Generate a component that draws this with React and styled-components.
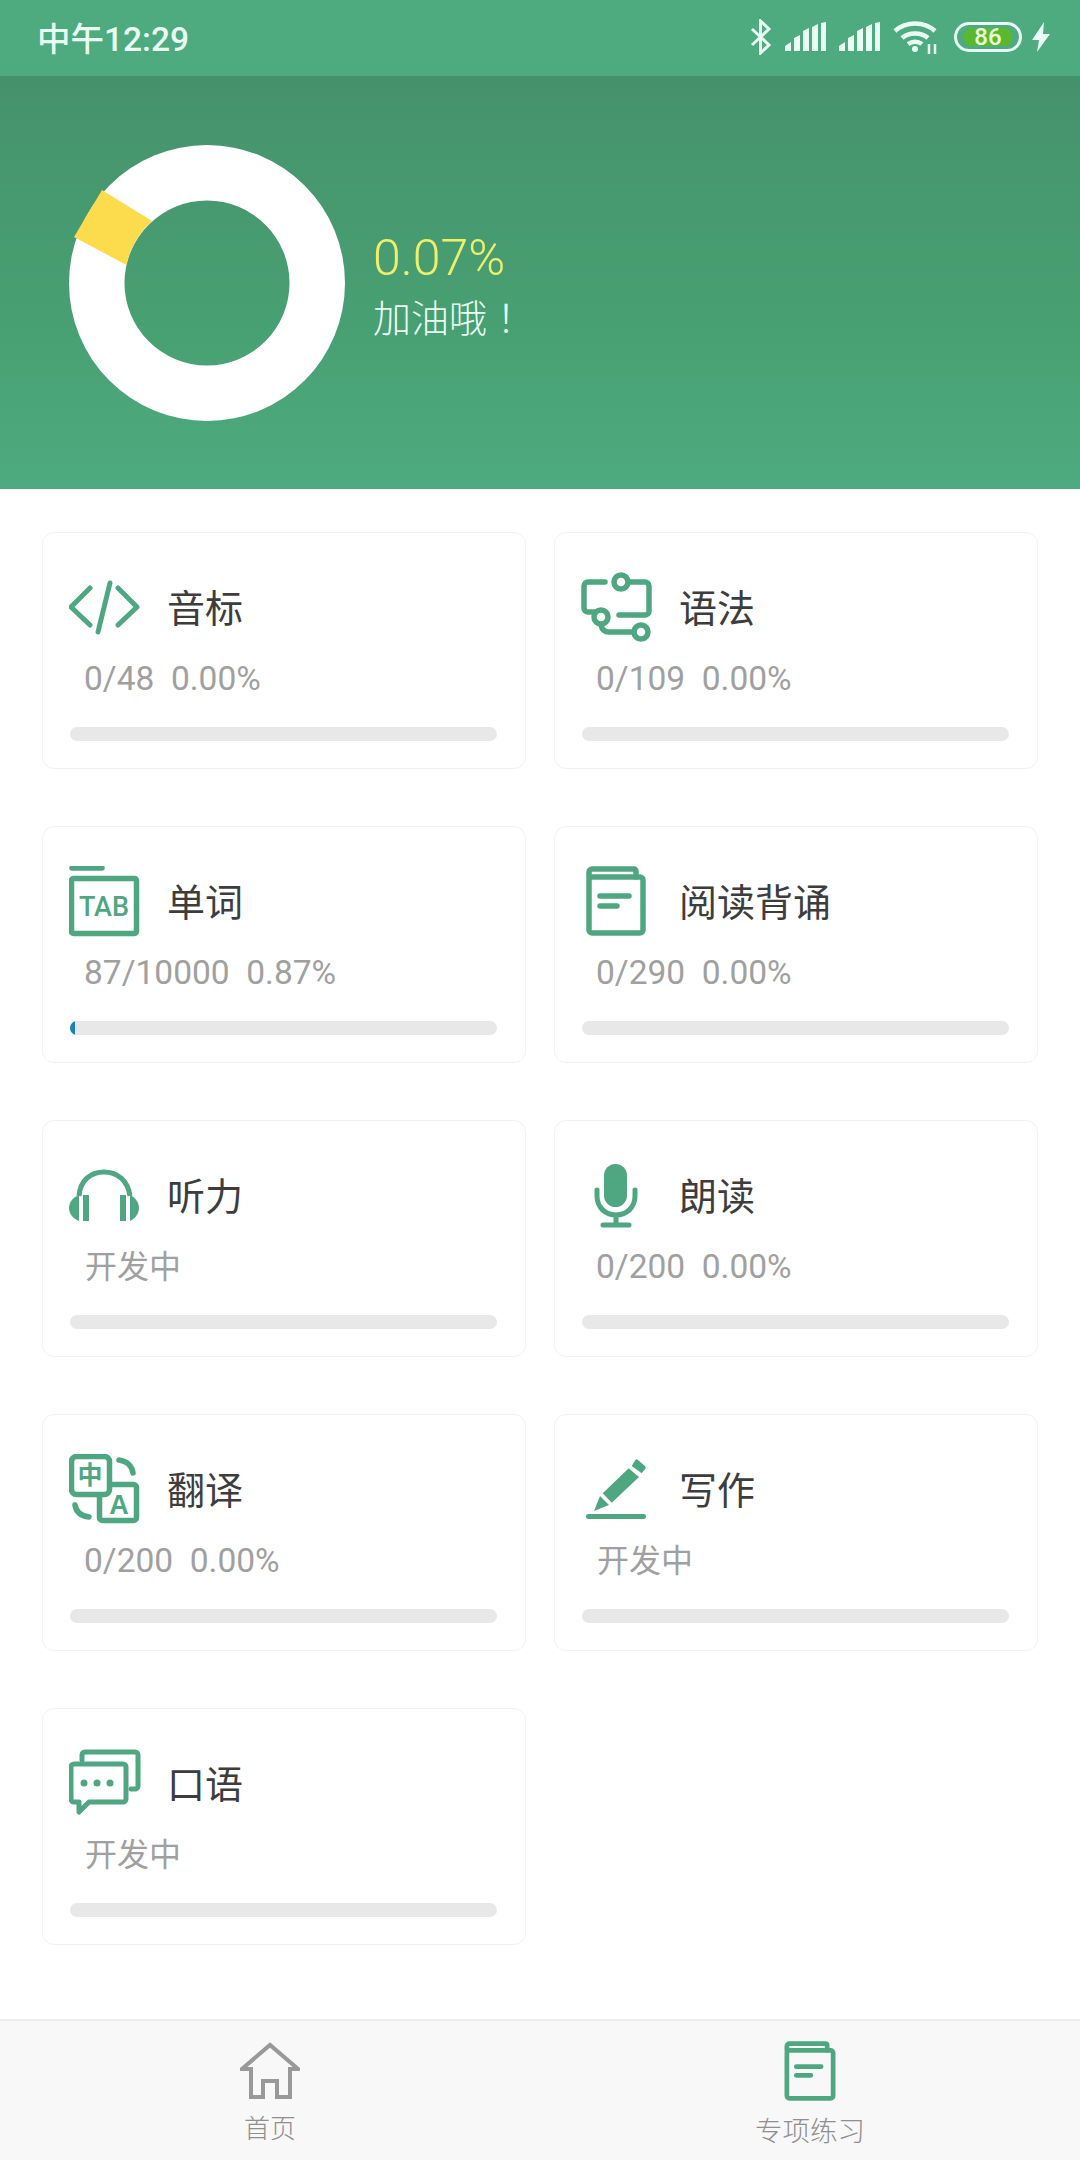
import styled, { createGlobalStyle } from 'styled-components';

const GREEN = '#4fa782';
const WIP = '开发中';

const cards = [
  { title: '音标', meta: '0/48  0.00%', icon: 'code' },
  { title: '语法', meta: '0/109  0.00%', icon: 'grammar' },
  { title: '单词', meta: '87/10000  0.87%', icon: 'tab', done: 1.2 },
  { title: '阅读背诵', meta: '0/290  0.00%', icon: 'book' },
  { title: '听力', meta: WIP, icon: 'headset' },
  { title: '朗读', meta: '0/200  0.00%', icon: 'mic' },
  { title: '翻译', meta: '0/200  0.00%', icon: 'translate' },
  { title: '写作', meta: WIP, icon: 'pencil' },
  { title: '口语', meta: WIP, icon: 'chat' },
];

const BookShape = () => (
  <g fill="none" stroke={GREEN} strokeWidth="5.5" strokeLinecap="round" strokeLinejoin="round">
    <path d="M8 11V6a3 3 0 0 1 3-3h42a2 2 0 0 1 2 2v6" />
    <rect x="8" y="11" width="54" height="56" rx="3" />
    <path d="M19 30h29M19 40h17" />
  </g>
);

const icons = {
  code: (
    <g fill="none" stroke={GREEN} strokeWidth="5" strokeLinecap="round" strokeLinejoin="round">
      <path d="M21 16 2 35l19 18M49 16l19 19-19 18M41 11 29 60" />
    </g>
  ),
  grammar: (
    <g fill="none" stroke={GREEN} strokeWidth="5.5" strokeLinecap="round" strokeLinejoin="round">
      <circle cx="40" cy="10" r="7" />
      <circle cx="20" cy="45" r="7" />
      <circle cx="60" cy="60" r="7" />
      <path d="M24 10H7a4 4 0 0 0-4 4v22a4 4 0 0 0 4 4h6" />
      <path d="M49 10h15a4 4 0 0 1 4 4v25a4 4 0 0 1-4 4H38" />
      <path d="M20 53c1 5 4 7 8 7h24" />
    </g>
  ),
  tab: (
    <>
      <g fill="none" stroke={GREEN} strokeWidth="5.5" strokeLinecap="round" strokeLinejoin="round">
        <path d="M3 2h30" />
        <rect x="2.5" y="12.5" width="65" height="55" rx="2" />
      </g>
      <text x="35" y="50" textAnchor="middle" fill={GREEN} fontSize="27" fontWeight="500" fontFamily="Roboto, sans-serif">TAB</text>
    </>
  ),
  book: <BookShape />,
  headset: (
    <g fill={GREEN}>
      <path d="M10 36C11 21 21 12 35 12s24 9 26 24" fill="none" stroke={GREEN} strokeWidth="5" />
      <path d="M10 35C3 38 0 43 0 48s3 10 10 13z" />
      <path d="M61 35c6 3 9 8 9 13s-3 10-9 13z" />
      <rect x="14" y="35" width="6" height="26" />
      <rect x="51" y="35" width="6" height="26" />
    </g>
  ),
  mic: (
    <g fill="none" stroke={GREEN} strokeWidth="5" strokeLinecap="round">
      <rect x="23" y="4" width="23" height="43" rx="11.5" fill={GREEN} stroke="none" />
      <path d="M16 30v6c0 11 8 19 19 19s19-8 19-19v-6M35 55v9M22 65h26" />
    </g>
  ),
  translate: (
    <>
      <g fill="none" stroke={GREEN} strokeWidth="5.5" strokeLinecap="round">
        <rect x="30.5" y="30.5" width="37" height="36" rx="3" />
        <rect x="2.5" y="2.5" width="38" height="38" rx="5" fill="#fff" />
        <path d="M50 6c8 1 13 6 14 13M6 51c1 7 6 11 14 12" />
      </g>
      <text x="21" y="30" textAnchor="middle" fill={GREEN} fontSize="25" fontWeight="700" fontFamily="'Noto Sans CJK SC', sans-serif">中</text>
      <text x="50" y="60" textAnchor="middle" fill={GREEN} fontSize="27" fontWeight="700" fontFamily="'Liberation Sans', sans-serif">A</text>
    </>
  ),
  pencil: (
    <g fill={GREEN}>
      <path d="M13 57 19 42l9 9z" />
      <path d="M21.7 39.3 47.7 14.3 58 23 30.7 48.7z" />
      <path d="M50.7 12 54 6.5a2 2 0 0 1 3-.5l7 6a2 2 0 0 1 .3 2.7L60.7 19.3z" />
      <rect x="5" y="60" width="60" height="5" rx="2.5" />
    </g>
  ),
  chat: (
    <g fill="none" stroke={GREEN} strokeWidth="5" strokeLinecap="round" strokeLinejoin="round">
      <path d="M13 12V7a3 3 0 0 1 3-3h50a3 3 0 0 1 3 3v31a3 3 0 0 1-3 3h-4" />
      <path d="M5 16h49a3 3 0 0 1 3 3v32a3 3 0 0 1-3 3H20l-10 10v-10H5a3 3 0 0 1-3-3V19a3 3 0 0 1 3-3z" />
      <g fill={GREEN} stroke="none">
        <circle cx="15" cy="35" r="3.5" />
        <circle cx="28" cy="35" r="3.5" />
        <circle cx="41" cy="35" r="3.5" />
      </g>
    </g>
  ),
};

const SignalBars = () => (
  <svg width="41" height="30" viewBox="0 0 41 30" fill="#e9fff3">
    <path d="M0 29v-5l6-4v9zM9 29V16l6-3v16zM18 29V9l6-3v23zM27 29V5l6-3v27zM36 29V1l5-1v29z" />
  </svg>
);

const App = () => (
  <Page>
    <GlobalStyle />
    <StatusBar>
      <Time>中午12:29</Time>
      <StatusIcons>
        <svg width="22" height="36" viewBox="0 0 22 36" fill="none" stroke="#e9fff3" strokeWidth="3">
          <path d="M2 10l17 16-8.5 8V2L19 10 2 26" />
        </svg>
        <SignalBars />
        <SignalBars />
        <svg width="46" height="34" viewBox="0 0 46 34" fill="none" stroke="#e9fff3" strokeWidth="4.5">
          <path d="M2 11c11-10 29-10 40 0M9 18c7-6 19-6 26 0M15 24c4-3 10-3 14 0" />
          <circle cx="22" cy="29" r="3" fill="#e9fff3" stroke="none" />
          <path d="M36 24v10M42 24v10" strokeWidth="2.5" />
        </svg>
        <Battery>
          <BatteryFill>86</BatteryFill>
        </Battery>
        <Bolt>
          <svg width="18" height="30" viewBox="0 0 18 30" fill="#e9fff3">
            <path d="M12 0 0 18h7L5 30l13-18h-7z" />
          </svg>
        </Bolt>
      </StatusIcons>
    </StatusBar>

    <Header>
      <svg width="276" height="276" viewBox="0 0 276 276">
        <path
          fillRule="evenodd"
          fill="#fff"
          d="M138 0a138 138 0 1 0 0 276a138 138 0 1 0 0-276zM138 55.5a82.5 82.5 0 1 1 0 165a82.5 82.5 0 1 1 0-165z"
        />
        <path fill="#fcdc4c" d="M33 45 83 76A82.5 82.5 0 0 0 57.4 120L5 92z" />
      </svg>
      <Progress>
        <Percent>0.07%</Percent>
        <Cheer>加油哦！</Cheer>
      </Progress>
    </Header>

    <CardGrid>
      {cards.map((card) => (
        <Card key={card.title}>
          <CardHead>
            <svg width="72" height="72" viewBox="0 0 72 72">{icons[card.icon]}</svg>
            <CardTitle>{card.title}</CardTitle>
          </CardHead>
          <CardMeta $wip={card.meta === WIP}>{card.meta}</CardMeta>
          <Bar>{card.done > 0 && <BarFill style={{ width: `${card.done}%` }} />}</Bar>
        </Card>
      ))}
    </CardGrid>

    <TabBar>
      <Tab>
        <svg width="60" height="60" viewBox="0 0 60 60" fill="none" stroke="#999" strokeWidth="4" strokeLinejoin="miter">
          <path d="M11 56V28H2L30 4l28 24h-8v28H37V40H23v16z" />
        </svg>
        <TabLabel>首页</TabLabel>
      </Tab>
      <Tab>
        <svg width="54" height="60" viewBox="5 0 60 70">
          <BookShape />
        </svg>
        <TabLabel $active>专项练习</TabLabel>
      </Tab>
    </TabBar>
  </Page>
);

const GlobalStyle = createGlobalStyle`
  html, body {
    margin: 0;
    padding: 0;
    background: #fff;
  }
  body {
    font-family: Roboto, "Noto Sans CJK SC", sans-serif;
  }
  svg {
    display: block;
    flex-shrink: 0;
  }
`;

const Page = styled.div`
  width: 1080px;
  height: 2160px;
  display: flex;
  flex-direction: column;
  background: #fff;
  overflow: hidden;
`;

const StatusBar = styled.div`
  height: 76px;
  flex-shrink: 0;
  box-sizing: border-box;
  padding: 0 30px 3px 37px;
  display: flex;
  align-items: center;
  justify-content: space-between;
  background: #4dab7f;
`;

const Time = styled.span`
  font-size: 33.5px;
  font-weight: 500;
  color: #eafff3;
`;

const StatusIcons = styled.div`
  display: flex;
  align-items: center;
  gap: 13px;
`;

const Battery = styled.div`
  width: 68px;
  height: 30px;
  box-sizing: border-box;
  padding: 3px;
  border: 3px solid #e9fff3;
  border-radius: 15px;
  margin-left: 2px;
`;

const BatteryFill = styled.div`
  height: 100%;
  margin: 0 4px;
  border-radius: 8px;
  background: #5ab82f;
  display: flex;
  align-items: center;
  justify-content: center;
  font-size: 24px;
  font-weight: 500;
  color: #eaffdc;
`;

const Bolt = styled.div`
  margin-left: -3px;
`;

const Header = styled.header`
  height: 413px;
  flex-shrink: 0;
  box-sizing: border-box;
  padding-left: 69px;
  display: flex;
  align-items: center;
  gap: 28px;
  background: linear-gradient(180deg, #45916c 0%, #47986f 25%, #47a072 60%, #4eab7f 100%);
`;

const Progress = styled.div`
  display: flex;
  flex-direction: column;
  margin-top: 7px;
`;

const Percent = styled.div`
  font-size: 50px;
  line-height: 60px;
  font-weight: 300;
  color: #eef06a;
`;

const Cheer = styled.div`
  font-size: 38px;
  line-height: 56px;
  font-weight: 300;
  color: #eafff5;
  font-family: "Noto Sans CJK TC", sans-serif;
`;

const CardGrid = styled.main`
  flex: 1;
  padding: 43px 43px 0 42px;
  display: grid;
  grid-template-columns: 484px 484px;
  grid-auto-rows: 237px;
  column-gap: 28px;
  row-gap: 57px;
  align-content: start;
`;

const Card = styled.section`
  box-sizing: border-box;
  padding: 39px 27px 0 26px;
  border: 1px solid #f1f1f1;
  border-radius: 12px;
  background: #fff;
`;

const CardHead = styled.div`
  height: 72px;
  display: flex;
  align-items: center;
  gap: 26px;
`;

const CardTitle = styled.h3`
  margin: -5px 0 0;
  font-size: 38px;
  font-weight: 400;
  color: #3d3d3d;
  font-family: "Noto Sans CJK SC", sans-serif;
`;

const CardMeta = styled.div`
  margin: 15px 0 0 ${(props) => (props.$wip ? '16px' : '15px')};
  font-size: ${(props) => (props.$wip ? '32px' : '33.5px')};
  line-height: 40px;
  font-weight: 400;
  color: #a0a0a0;
  white-space: pre;
`;

const Bar = styled.div`
  height: 14px;
  margin: 28px 1px 0;
  border-radius: 7px;
  background: #e8e8e8;
  overflow: hidden;
`;

const BarFill = styled.div`
  height: 100%;
  background: #1486b5;
`;

const TabBar = styled.nav`
  height: 141px;
  flex-shrink: 0;
  box-sizing: border-box;
  padding: 20px 0 0;
  display: grid;
  grid-template-columns: 540px 540px;
  background: #f8f8f8;
  border-top: 2px solid #eee;
`;

const Tab = styled.div`
  display: flex;
  flex-direction: column;
  align-items: center;
`;

const TabLabel = styled.span`
  margin-top: ${(props) => (props.$active ? '10px' : '8px')};
  font-size: ${(props) => (props.$active ? '27.5px' : '26px')};
  line-height: 36px;
  font-weight: 300;
  color: #8f8f8f;
  font-family: "Noto Sans CJK SC", sans-serif;
`;

export default App;
